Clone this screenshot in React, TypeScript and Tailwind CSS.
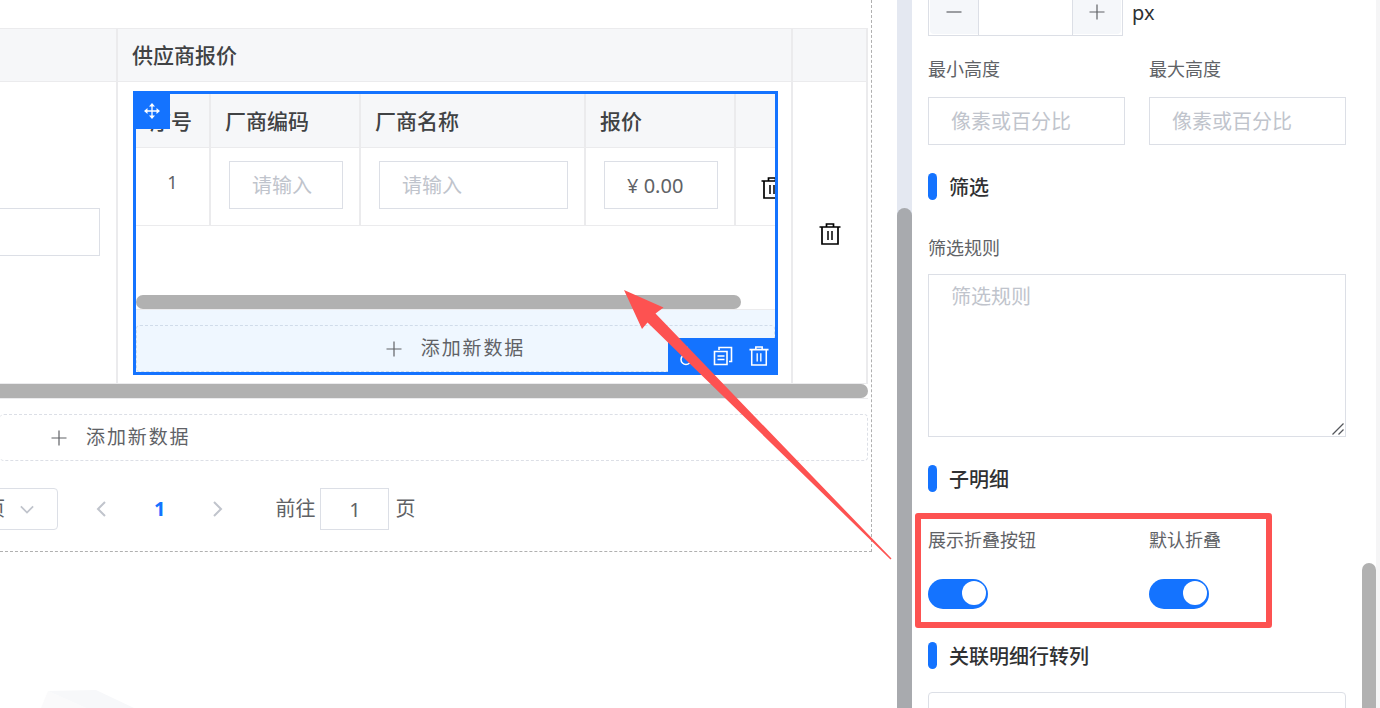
import { useState } from "react"
import type { ReactNode } from "react"

const LABEL = "block text-[18px] leading-6 text-[#606266]"
const INPUT =
  "h-12 w-full min-w-0 border border-[#dcdfe6] bg-white px-[22px] text-[20px] text-[#606266] placeholder:text-[#c0c4cc] outline-none"
const TH = "border-r-2 border-b border-[#ebebed] px-[14px] pt-0.5 text-left font-medium"

function TrashIcon({ className }: { className?: string }) {
  return (
    <svg viewBox="0 0 22 22" fill="none" stroke="currentColor" strokeWidth="2" className={className}>
      <path d="M.5 4h21M7.500 4V1h7v3M3 4v17h16V4" strokeWidth="1.700" />
      <path d="M9 8v9M13 8v9" strokeWidth="1.500" />
    </svg>
  )
}

function MoveIcon() {
  return (
    <svg viewBox="0 0 16 16" className="h-4 w-4" fill="none" stroke="currentColor" strokeWidth="1.300">
      <path d="M8 1v14M1 8h14" />
      <path d="M8 0l3 3.500H5zM8 16l3-3.500H5zM0 8l3.500-3v6zM16 8l-3.500-3v6z" fill="currentColor" stroke="none" />
    </svg>
  )
}

function CopyIcon() {
  return (
    <svg viewBox="0 0 20 20" className="h-5 w-5" fill="none" stroke="currentColor" strokeWidth="1.600">
      <path d="M1.500 5.500h12.500v13H1.500z" />
      <path d="M6 4V1.500h12.500v14H16" />
      <path d="M4.500 10h7M4.500 13.500h7" />
    </svg>
  )
}

function ParentIcon() {
  return (
    <svg viewBox="0 0 20 20" className="h-5 w-5" fill="none" stroke="currentColor" strokeWidth="1.500">
      <path d="M11 1.500C7 2 5 4 5 7.500h4" />
      <circle cx="9" cy="13.500" r="5" />
    </svg>
  )
}

function PlusIcon() {
  return (
    <svg viewBox="0 0 16 16" className="h-4 w-4" fill="none" stroke="currentColor" strokeWidth="1.200">
      <path d="M8 .5v15M.5 8h15" />
    </svg>
  )
}

function Chevron({ d, className }: { d: string; className?: string }) {
  return (
    <svg viewBox="0 0 16 16" className={className} fill="none" stroke="currentColor" strokeWidth="2">
      <path d={d} />
    </svg>
  )
}

function AddRow({ className }: { className: string }) {
  return (
    <button
      className={`flex h-[47px] w-full items-center gap-[19px] rounded-sm border border-dashed text-[19px] tracking-widest text-[#606266] ${className}`}
    >
      <PlusIcon />
      添加新数据
    </button>
  )
}

function SectionTitle({ children, className }: { children: ReactNode; className: string }) {
  return (
    <h3 className={`flex h-[27px] items-center gap-3 text-[20px] font-medium text-[#303133] ${className}`}>
      <span className="h-full w-[9px] rounded-full bg-[#1473ff]" />
      <span className="pt-0.5">{children}</span>
    </h3>
  )
}

function Switch({ id, label }: { id: string; label: string }) {
  const [on, setOn] = useState(true)
  return (
    <label htmlFor={id} className={LABEL}>
      {label}
      <input
        id={id}
        type="checkbox"
        role="switch"
        checked={on}
        onChange={(e) => setOn(e.target.checked)}
        className="peer sr-only"
      />
      <span className="mt-[27px] flex h-[30px] w-[60px] items-center rounded-full bg-[#dcdfe6] px-0.5 pb-0.5 peer-checked:justify-end peer-checked:bg-[#1473ff]">
        <span className="h-6 w-6 rounded-full bg-white" />
      </span>
    </label>
  )
}

function QuoteTable() {
  const td = "border-r-2 border-b border-[#ebebed] pt-[13px] pr-4 pb-4 pl-[18px]"
  return (
    <div className="relative border-[3px] border-[#1473ff] bg-white">
      <div className="overflow-hidden">
        <table className="w-[675px] table-fixed border-separate border-spacing-0">
          <colgroup>
            <col className="w-[75px]" />
            <col className="w-[150px]" />
            <col className="w-[225px]" />
            <col className="w-[150px]" />
            <col className="w-[75px]" />
          </colgroup>
          <thead className="bg-[#f6f7f9] text-[21px] text-[#404244]">
            <tr className="h-[54px]">
              <th className={TH}>序号</th>
              <th className={TH}>厂商编码</th>
              <th className={TH}>厂商名称</th>
              <th className={TH}>报价</th>
              <th className={TH} aria-label="操作" />
            </tr>
          </thead>
          <tbody>
            <tr>
              <td className="border-r-2 border-b border-[#ebebed] pb-2 text-center text-[18px] text-[#606266]">1</td>
              <td className={td}>
                <input aria-label="厂商编码" placeholder="请输入" className={INPUT + " block"} />
              </td>
              <td className={td}>
                <input aria-label="厂商名称" placeholder="请输入" className={INPUT + " block"} />
              </td>
              <td className={td}>
                <input aria-label="报价" defaultValue="¥ 0.00" className={INPUT + " block"} />
              </td>
              <td className="border-b border-[#ebebed] pr-1 text-center">
                <button aria-label="删除" className="align-middle text-black">
                  <TrashIcon className="h-[22px] w-[22px]" />
                </button>
              </td>
            </tr>
          </tbody>
        </table>
      </div>
      <div className="mt-[69px] mr-[34px] h-[14px] rounded-full bg-[#b1b1b1]" />
      <div className="border-t border-[#ebebed] bg-[#eff7ff] pt-[15px]">
        <AddRow className="justify-center border-[#d0dcea]" />
      </div>

      <button
        aria-label="移动"
        className="absolute -top-[3px] -left-[3px] flex h-[38px] w-[37px] items-center justify-center bg-[#1473ff] pt-0.5 text-white"
      >
        <MoveIcon />
      </button>
      <div className="absolute -right-[3px] -bottom-[3px] flex h-[37px] items-center gap-4 bg-[#1473ff] px-[9px] pb-0.5 text-white">
        <button aria-label="选择父级">
          <ParentIcon />
        </button>
        <button aria-label="复制">
          <CopyIcon />
        </button>
        <button aria-label="删除">
          <TrashIcon className="h-5 w-5" />
        </button>
      </div>
    </div>
  )
}

function Pagination() {
  return (
    <nav className="mt-[27px] mb-[21px] flex items-center text-[20px] text-[#606266]">
      {/* page size select starts in the scrolled-out part of the canvas */}
      <div className="relative -ml-[92px]">
        <select
          aria-label="每页条数"
          className="h-[42px] w-[150px] appearance-none rounded border border-[#dcdfe6] bg-white pl-[26px] outline-none"
        >
          <option>20条/页</option>
        </select>
        <Chevron
          d="M1 5l7 7 7-7"
          className="pointer-events-none absolute top-[14px] right-6 h-[14px] w-[14px] text-[#c0c4cc]"
        />
      </div>
      <button aria-label="上一页" className="ml-9 text-[#c0c4cc]">
        <Chevron d="M11 1L4 8l7 7" className="h-4 w-4" />
      </button>
      <button className="mx-11 font-bold text-[#1473ff]">1</button>
      <button aria-label="下一页" className="text-[#c0c4cc]">
        <Chevron d="M5 1l7 7-7 7" className="h-4 w-4" />
      </button>
      <label className="ml-[50px] flex items-center">
        前往
        <input
          defaultValue="1"
          className="mr-1.5 ml-[5px] h-[42px] w-[69px] border border-[#dcdfe6] text-center outline-none"
        />
        页
      </label>
    </nav>
  )
}

function Canvas() {
  return (
    <main className="relative min-w-0 flex-1 overflow-hidden bg-white pr-[25px]">
      <section className="border-r border-b border-dashed border-[#b0b0b0] pt-7 pr-[3px]">
        <table className="w-full table-fixed border-separate border-spacing-0">
          <colgroup>
            <col className="w-[118px]" />
            <col />
            <col className="w-[75px]" />
          </colgroup>
          <thead className="bg-[#f6f7f9] text-[21px] text-[#404244]">
            <tr className="h-[54px]">
              <th className={TH + " border-t"} aria-label="名称" />
              <th className={TH + " border-t"}>供应商报价</th>
              <th className={TH + " border-t"} aria-label="操作" />
            </tr>
          </thead>
          <tbody>
            <tr>
              <td className="border-r-2 border-b border-[#ebebed] pr-4 pb-0.5">
                <input aria-label="名称" className={INPUT + " block border-l-0"} />
              </td>
              <td className="border-r-2 border-b border-[#ebebed] pt-[9px] pr-[13px] pb-2 pl-[15px]">
                <QuoteTable />
              </td>
              <td className="border-r-2 border-b border-[#ebebed] text-center">
                <button aria-label="删除" className="align-middle text-black">
                  <TrashIcon className="h-[22px] w-[22px]" />
                </button>
              </td>
            </tr>
          </tbody>
        </table>
        <div className="border-b border-[#ebebed]">
          <div className="h-[14px] rounded-r-full bg-[#b1b1b1]" />
        </div>
        <div className="mt-[15px]">
          <AddRow className="border-l-0 border-[#dcdfe6] pl-[51px]" />
        </div>
        <Pagination />
      </section>

      {/* corner of the empty-state drawing */}
      <svg viewBox="0 0 94 18" className="absolute bottom-0 left-10 h-[18px] w-[94px]">
        <path d="M8 1L1 18h45z" fill="#fafafb" />
        <path d="M8 1L56 0l38 18H46z" fill="#f7f8fa" />
      </svg>
    </main>
  )
}

function SettingsPanel() {
  return (
    <aside className="flex w-[468px] shrink-0 bg-white">
      <div className="-mt-3 min-w-0 flex-1 pl-4">
        <div className="flex items-center gap-[9px] text-[20px] text-[#303133]">
          <div className="flex h-12 w-[195px] border border-[#dcdfe6] text-[#606266]">
            <div className="border-r border-[#dcdfe6] pb-px pl-px">
              <button aria-label="减少" className="flex h-full w-12 items-center justify-center rounded-bl bg-[#f5f7fa]">
                <svg viewBox="0 0 16 16" className="h-4 w-4" stroke="currentColor" strokeWidth="1.200">
                  <path d="M.5 8h15" />
                </svg>
              </button>
            </div>
            <input id="height" aria-label="高度" className="min-w-0 flex-1 text-center outline-none" />
            <div className="border-l border-[#dcdfe6] pr-px pb-px">
              <button aria-label="增加" className="flex h-full w-12 items-center justify-center rounded-br bg-[#f5f7fa]">
                <PlusIcon />
              </button>
            </div>
          </div>
          <label htmlFor="height" className="pt-0.5 leading-6">px</label>
        </div>

        <div className="mt-[21px] grid grid-cols-2 gap-6">
          <div>
            <label htmlFor="min-height" className={LABEL}>最小高度</label>
            <input id="min-height" placeholder="像素或百分比" className={INPUT + " mt-4 block"} />
          </div>
          <div>
            <label htmlFor="max-height" className={LABEL}>最大高度</label>
            <input id="max-height" placeholder="像素或百分比" className={INPUT + " mt-4 block"} />
          </div>
        </div>

        <SectionTitle className="mt-7">筛选</SectionTitle>
        <label htmlFor="filter-rule" className={LABEL + " mt-9"}>筛选规则</label>
        <div className="relative mt-[14px]">
          <textarea
            id="filter-rule"
            placeholder="筛选规则"
            className="block h-[163px] w-full resize-none border border-[#dcdfe6] px-[22px] py-[7px] text-[20px] leading-[30px] placeholder:text-[#c0c4cc] outline-none"
          />
          <svg
            viewBox="0 0 12 12"
            className="pointer-events-none absolute right-0.5 bottom-0.5 h-3 w-3"
            fill="none"
            stroke="#55575c"
            strokeWidth="1.300"
          >
            <path d="M.5 11.500l11-11M6.500 11.500l5-5" />
          </svg>
        </div>

        <SectionTitle className="mt-7">子明细</SectionTitle>
        <div className="mt-9 grid grid-cols-2 gap-6">
          <Switch id="show-fold" label="展示折叠按钮" />
          <Switch id="default-fold" label="默认折叠" />
        </div>

        <SectionTitle className="mt-[33px]">关联明细行转列</SectionTitle>
        <button className="mt-[23px] h-[50px] w-full rounded-sm border border-[#dcdfe6] text-[18px] text-[#606266]">
          点击设置
        </button>
      </div>
      <div className="ml-4 flex w-[18px] flex-col justify-end border-r-4 border-[#f5f5f6]">
        <div className="h-[145px] rounded-t-full bg-[#b1b1b1]" />
      </div>
    </aside>
  )
}

export default function App() {
  return (
    <div className="relative flex h-screen overflow-hidden font-['Noto_Sans','Noto_Sans_CJK_SC',sans-serif]">
      <Canvas />
      <div className="w-[15px] shrink-0 bg-[#e4e8f1] pt-52">
        <div className="h-full rounded-t-full bg-[#a8aaae]" />
      </div>
      <SettingsPanel />

      {/* callout: highlighted switches and arrow to the nested table */}
      <div className="pointer-events-none absolute top-[513px] right-[108px] h-[115px] w-[357px] rounded-[3px] border-[6px] border-[#fd5251]" />
      <svg
        viewBox="0 0 268 270"
        className="pointer-events-none absolute top-[290px] right-[488px] h-[270px] w-[268px]"
        fill="#fd5251"
      >
        <path d="M0 0L39.500 17.500 31.500 23.500 267.500 268.500 266.500 269.500 23.500 32.500 18 39z" />
      </svg>
    </div>
  )
}
